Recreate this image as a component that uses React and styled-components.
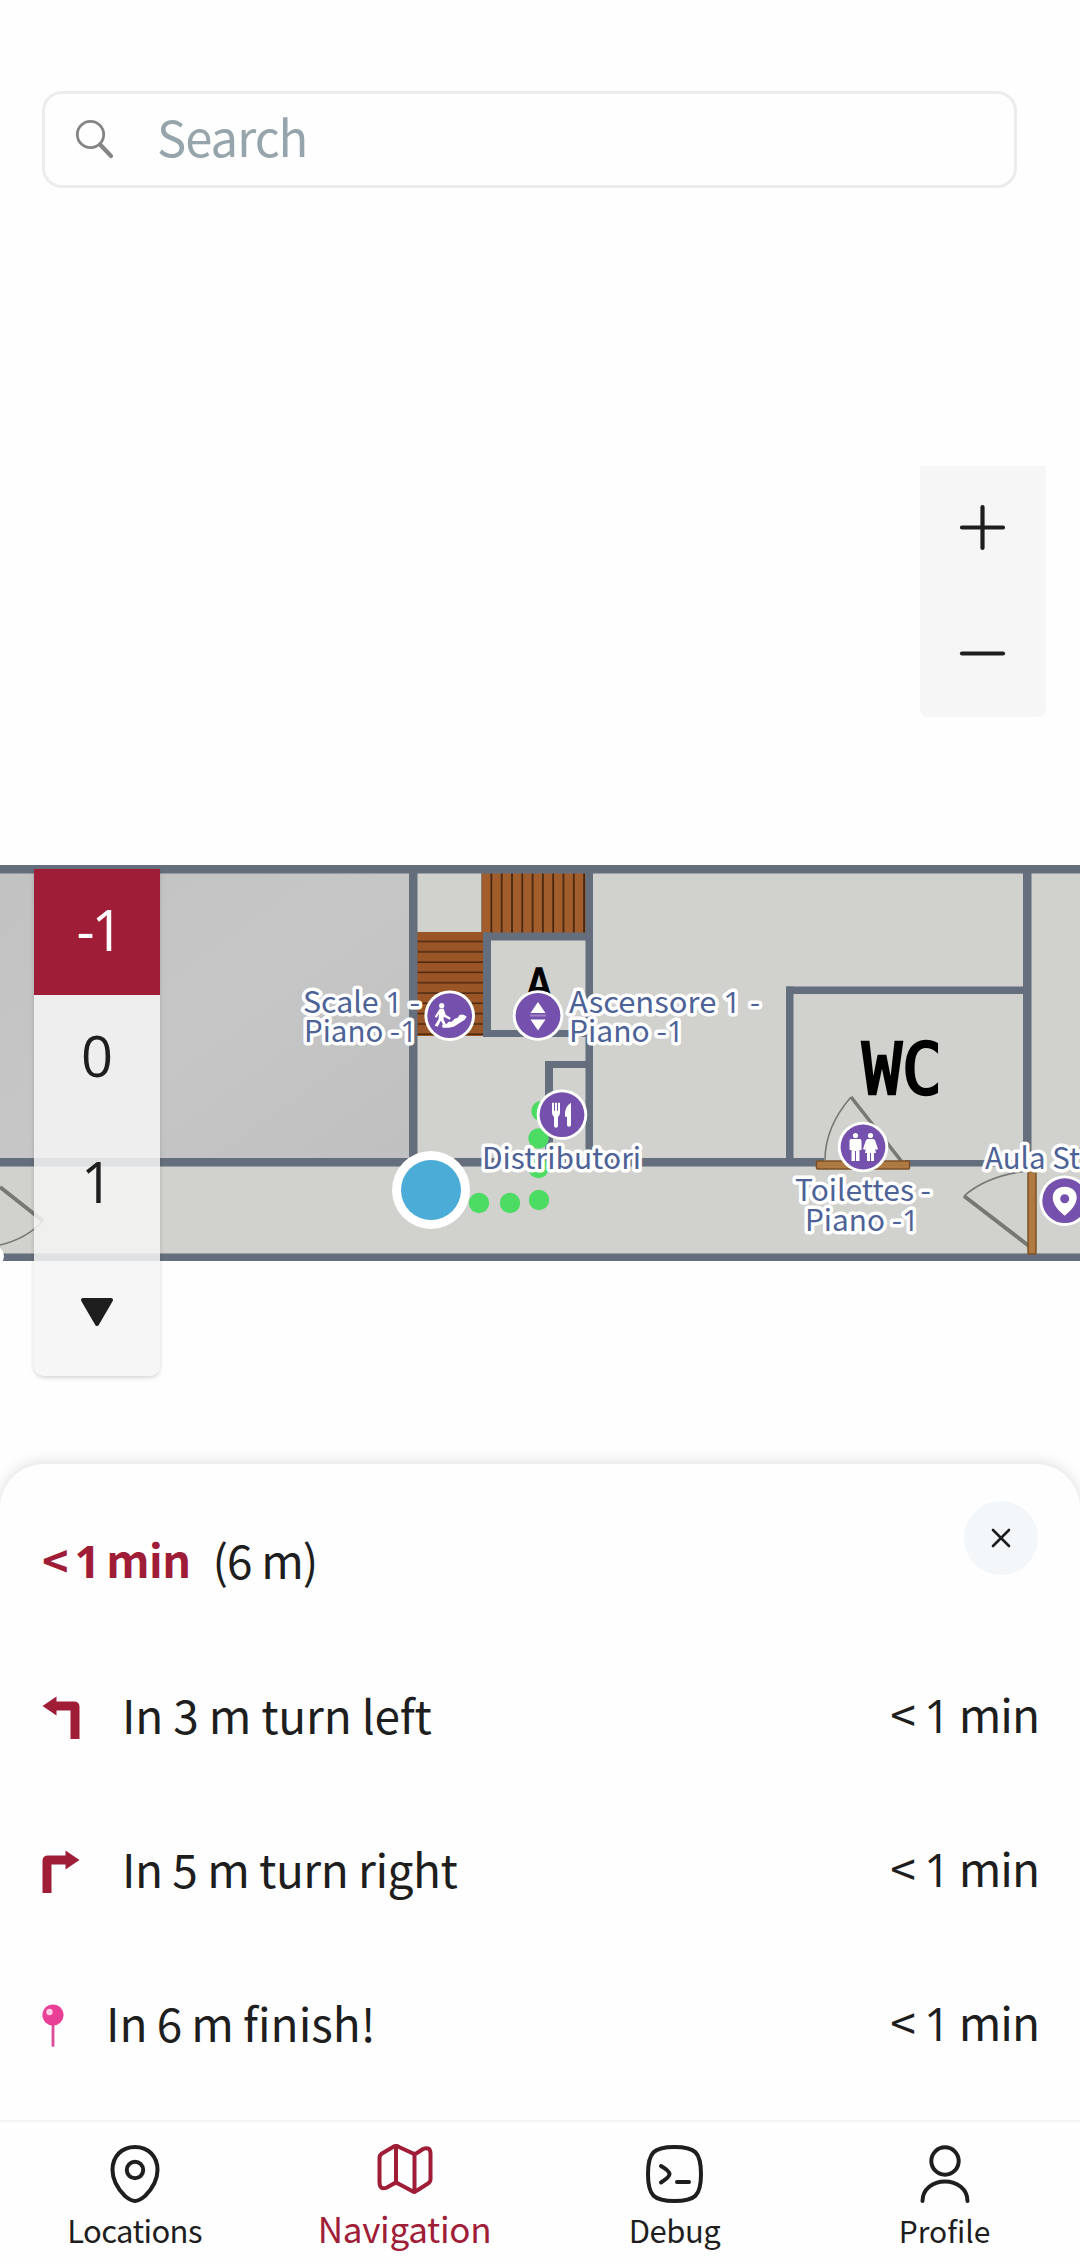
import React from "react";
import styled, { createGlobalStyle } from "styled-components";

const crimson = "#a01d38";
const ink = "#1e1e1e";
const wall = "#656e7c";

const GlobalStyle = createGlobalStyle`
  * { box-sizing: border-box; }
  body {
    margin: 0;
    background: #fefefe;
    font-family: "Noto Sans CJK SC", "Open Sans", sans-serif;
    color: ${ink};
  }
  button { font: inherit; color: inherit; border: 0; padding: 0; background: none; }
`;

const Screen = styled.div`
  width: 1080px;
  height: 2264px;
  display: flex;
  flex-direction: column;
  overflow: hidden;
  background: #fefefe;
`;

/* ---------- map ---------- */

const MapView = styled.main`
  position: relative;
  flex: 0 0 1464px;
`;

const PlanCanvas = styled.svg`
  position: absolute;
  inset: 0;
  display: block;
`;

const SearchBar = styled.div`
  position: absolute;
  left: 42px;
  top: 91px;
  width: 975px;
  height: 97px;
  display: flex;
  align-items: center;
  gap: 42px;
  padding-left: 30px;
  border: 3px solid #ececec;
  border-radius: 20px;
  background: #fefefe;
`;

const SearchLabel = styled.span`
  padding-bottom: 8px;
  font-size: 49px;
  line-height: 1;
  color: #95a5ab;
  letter-spacing: ${(p) => p.$track}px;
`;

const ZoomPanel = styled.div`
  position: absolute;
  left: 920px;
  top: 466px;
  width: 126px;
  display: flex;
  flex-direction: column;
  background: #f6f6f6;
  border-radius: 2px 2px 8px 8px;
`;

const ZoomButton = styled.button`
  height: 125.5px;
  display: flex;
  align-items: center;
  justify-content: center;
`;

const FloorPanel = styled.div`
  position: absolute;
  left: 34px;
  top: 869px;
  width: 126px;
  height: 507px;
  display: flex;
  flex-direction: column;
  overflow: hidden;
  border-radius: 0 0 10px 10px;
  background: rgba(245, 245, 245, 0.86);
  box-shadow: 0 2px 4px rgba(0, 0, 0, 0.16);
`;

const FloorButton = styled.button`
  height: 126px;
  flex: ${(p) => (p.$last ? "1" : "none")};
  display: flex;
  align-items: center;
  justify-content: center;
  padding-bottom: ${(p) => (p.$last ? 0 : 6)}px;
  padding-left: ${(p) => (p.$active ? 3 : 0)}px;
  font-family: "Open Sans", "Noto Sans", sans-serif;
  font-size: 56px;
  line-height: 1;
  font-weight: ${(p) => (p.$active ? 500 : 400)};
  letter-spacing: ${(p) => (p.$active ? "-3px" : "0")};
  color: ${(p) => (p.$active ? "#fff" : ink)};
  background: ${(p) => (p.$active ? crimson : "transparent")};
`;

/* ---------- directions sheet ---------- */

const Sheet = styled.section`
  position: relative;
  flex: 1;
  display: flex;
  flex-direction: column;
  padding: 37px 42px 0;
  background: #fefefe;
  border-radius: 44px 44px 0 0;
  box-shadow: 0 -2px 14px rgba(0, 0, 0, 0.12);
`;

const SheetHeader = styled.header`
  height: 139px;
  display: flex;
  justify-content: space-between;
  align-items: flex-start;
`;

const Summary = styled.div`
  display: flex;
  gap: 22px;
  padding-top: 34px;
  font-size: 46px;
  line-height: 48px;
`;

const Duration = styled.strong`
  font-weight: 700;
  font-size: 45px;
  color: ${crimson};
  white-space: nowrap;
  letter-spacing: ${(p) => p.$track}px;
  word-spacing: -3px;
`;

const Distance = styled.span`
  white-space: nowrap;
  letter-spacing: ${(p) => p.$track}px;
`;

const CloseButton = styled.button`
  width: 74px;
  height: 74px;
  display: flex;
  align-items: center;
  justify-content: center;
  border-radius: 50%;
  background: #f3f7fa;
`;

const Step = styled.div`
  height: 154px;
  display: flex;
  align-items: center;
  font-size: 46px;
  line-height: 48px;
`;

const StepIcon = styled.span`
  width: ${(p) => p.$width}px;
  display: flex;
  flex: none;
`;

const StepText = styled.span`
  flex: 1;
  padding-bottom: 6px;
  white-space: nowrap;
  letter-spacing: ${(p) => (p.$track ? `${p.$track}px` : "normal")};
  word-spacing: ${(p) => p.$words || 0}px;
`;

const StepTime = styled.span`
  padding-bottom: 6px;
  margin-right: -1px;
  white-space: nowrap;
  letter-spacing: -1px;
`;

/* Numeral one without a foot. */
const One = styled.span`
  font-family: "Open Sans", "Noto Sans", sans-serif;
`;

/* ---------- tab bar ---------- */

const TabBar = styled.nav`
  position: relative;
  height: 144px;
  display: grid;
  grid-template-columns: repeat(4, 1fr);
  border-top: 2px solid #f4f4f4;
  background: #fefefe;
`;

const Tab = styled.button`
  display: flex;
  flex-direction: column;
  align-items: center;
  padding-top: ${(p) => (p.$active ? 21 : 23)}px;
  padding-right: 1px;
  color: ${(p) => (p.$active ? crimson : ink)};
`;

const TabIcon = styled.span`
  height: ${(p) => (p.$active ? 64 : 66)}px;
  display: flex;
`;

const TabLabel = styled.span`
  font-size: ${(p) => p.$size}px;
  line-height: ${(p) => (p.$active ? 42 : 38)}px;
  letter-spacing: ${(p) => (p.$track ? `${p.$track}px` : "normal")};
`;

/* ---------- map drawing ---------- */

const Label = styled.text`
  font-size: 29.5px;
  fill: #4d6296;
  stroke: #fff;
  stroke-width: 7px;
  stroke-linejoin: round;
  paint-order: stroke;
`;

const NarrowOne = styled.tspan`
  font-family: "Open Sans", "Noto Sans", sans-serif;
`;

const PlanText = styled.text`
  font-family: "DejaVu Sans Mono", monospace;
  fill: #000;
  stroke: #000;
  stroke-width: ${(p) => p.$weight}px;
`;

function MapLabel({ x, y, width, children }) {
  const parts = children.split(/(1)/);
  return (
    <Label x={x} y={y} textLength={width} lengthAdjust="spacingAndGlyphs">
      {parts.map((part, i) => (part === "1" ? <NarrowOne key={i}>1</NarrowOne> : part))}
    </Label>
  );
}

function Marker({ x, y, children }) {
  return (
    <g transform={`translate(${x} ${y})`}>
      <circle r="25.3" fill="#fff" />
      <circle r="22.4" fill="#7550ac" />
      <g fill="#fff">{children}</g>
    </g>
  );
}

const walls = [
  [0, 865, 1080, 8.5],
  [0, 1158, 824, 8.5],
  [905, 1160, 120, 6.5],
  [0, 1253.5, 1080, 7.5],
  [409, 865, 8.5, 296],
  [585.5, 865, 7.5, 296],
  [483, 932.5, 105, 8],
  [483, 932.5, 8, 104],
  [483, 1030, 105, 7],
  [545, 1061, 42, 7],
  [545, 1061, 8, 98],
  [786, 986.5, 7.5, 178],
  [786, 986.5, 240, 7.5],
  [1023, 865, 8.5, 300],
];

const routeDots = [
  [479, 1203], [510, 1203], [539, 1200], [538.5, 1168], [538.5, 1138.5], [541.5, 1111],
];

function FloorPlan() {
  return (
    <PlanCanvas width="1080" height="1464" viewBox="0 0 1080 1464">
      <defs>
        <linearGradient id="hall" x1="0" y1="0" x2="1" y2="1">
          <stop offset="0" stopColor="#c2c2c2" />
          <stop offset="0.5" stopColor="#c6c6c6" />
          <stop offset="1" stopColor="#c0c0c0" />
        </linearGradient>
        <pattern id="treadsUp" x="482" y="874" width="10.3" height="60" patternUnits="userSpaceOnUse">
          <rect width="10.3" height="60" fill="#a15d2c" />
          <rect x="8.5" width="1.8" height="60" fill="#4a2810" />
        </pattern>
        <pattern id="treadsAcross" x="418" y="932" width="66" height="10.3" patternUnits="userSpaceOnUse">
          <rect width="66" height="10.3" fill="#9a5526" />
          <rect y="8.8" width="66" height="1.5" fill="#4a2810" />
        </pattern>
      </defs>

      <rect y="866" width="1080" height="394" fill="#d1d1ce" />
      <rect y="866" width="410" height="294" fill="url(#hall)" />
      <rect x="481.5" y="873" width="105" height="60" fill="url(#treadsUp)" />
      <rect x="417" y="932" width="66" height="104" fill="url(#treadsAcross)" />

      {walls.map(([x, y, w, h], i) => (
        <rect key={i} x={x} y={y} width={w} height={h} fill={wall} />
      ))}

      <g fill="none" stroke="#777773">
        <path d="M0 1187L43 1221" strokeWidth="4" />
        <path d="M43 1221Q26 1239 0 1245" strokeWidth="1.6" />
        <path d="M851 1097L902 1162" strokeWidth="3.6" />
        <path d="M851 1097Q825 1127 825 1160" strokeWidth="1.6" />
        <path d="M964 1196L1029 1246" strokeWidth="4" />
        <path d="M964 1196Q988 1175 1029 1171" strokeWidth="1.6" />
      </g>
      <g fill="#ae7a42" stroke="#7b5129" strokeWidth="1.5">
        <rect x="816.5" y="1161" width="93" height="8" rx="1" />
        <rect x="1028" y="1168" width="8" height="86" rx="1" />
      </g>

      <PlanText x="862" y="1094" fontSize="72" textLength="80" lengthAdjust="spacingAndGlyphs" $weight={2.6}>WC</PlanText>
      <PlanText x="526" y="999" fontSize="43" textLength="26" lengthAdjust="spacingAndGlyphs" $weight={1.4}>A</PlanText>

      <circle cx="-6" cy="1256" r="10" fill="#fff" />

      {routeDots.map(([x, y], i) => (
        <circle key={i} cx={x} cy={y} r="10.2" fill="#4cdb63" />
      ))}
      <circle cx="431" cy="1190" r="39" fill="#fff" />
      <circle cx="431" cy="1190" r="30" fill="#4aacd7" />

      <Marker x={449.7} y={1015.7}>
        <circle cx="-8" cy="-10" r="2.6" />
        <path d="M-10-7L-6-7L-4-1L1 2L0 4L-6 1L-6 4L-3 10L-5 11L-9 5L-12 11L-15 10L-11 3L-11-2L-13 2L-15 1Z" />
        <path d="M-8 9L-4 9L-1 6L2 6L5 3L8 2L10-1L14-1L17 1L15 4L4 11L-1 12L-7 12Z" />
      </Marker>
      <Marker x={538} y={1015.5}>
        <path d="M0-13.500L7.500-2.500H-7.500Z" />
        <rect x="-8" y="-1" width="16" height="2" opacity="0.3" />
        <path d="M0 15L7.500 4H-7.500Z" />
      </Marker>
      <Marker x={562} y={1114.7}>
        <path d="M-10-12h2v8h1v-8h2v8h1v-8h2v9q0 4-2 5v9q0 2-2 2t-2-2v-9q-2-1-2-5Z" />
        <path d="M9-12v22q0 2-2 2t-2-2v-8h-2q-1-10 6-14Z" />
      </Marker>
      <Marker x={863} y={1147}>
        <circle cx="-7.500" cy="-11.500" r="2.600" />
        <path d="M-12-8h9q1.500 0 1.500 2v9h-2v11h-3.500v-10h-1v10h-3.500v-11h-2v-9q0-2 1.500-2Z" />
        <circle cx="7.500" cy="-11.500" r="2.600" />
        <path d="M5-8h5q2 0 3 4l2 6l-2 1l-1-2l1 5h-2v8h-3v-8h-1v8h-3v-8h-2l1-5l-1 2l-2-1l2-6q1-4 3-4Z" />
      </Marker>
      <Marker x={1064.7} y={1200.7}>
        <path fillRule="evenodd" d="M0-14C8-14 12-9 12-3C12 4 5 11 0 15C-5 11-12 4-12-3C-12-9-8-14 0-14ZM0-6.500A4.500 4.500 0 1 0 0 2.500A4.500 4.500 0 1 0 0-6.500Z" />
      </Marker>

      <MapLabel x={303} y={1013} width={117}>Scale 1 -</MapLabel>
      <MapLabel x={304} y={1042} width={113}>Piano -1</MapLabel>
      <MapLabel x={569} y={1013} width={172}>Ascensore 1</MapLabel>
      <MapLabel x={750} y={1013} width={10}>-</MapLabel>
      <MapLabel x={569} y={1042} width={115}>Piano -1</MapLabel>
      <MapLabel x={482} y={1169} width={159}>Distributori</MapLabel>
      <MapLabel x={795} y={1201} width={136}>Toilettes -</MapLabel>
      <MapLabel x={805} y={1231} width={114}>Piano -1</MapLabel>
      <MapLabel x={985} y={1169} width={95}>Aula St</MapLabel>
    </PlanCanvas>
  );
}

/* ---------- icons ---------- */

const LineIcon = styled.svg`
  display: block;
  flex: none;
  overflow: visible;
  fill: none;
  color: ${(p) => p.$color || "inherit"};
  stroke: currentColor;
  stroke-linecap: round;
  stroke-linejoin: round;
`;

const SearchIcon = () => (
  <LineIcon width="40" height="40" viewBox="0 0 40 40" $color="#858585">
    <circle cx="15.500" cy="14.500" r="13.200" strokeWidth="2.800" />
    <path d="M25.500 25L36 36" strokeWidth="4.200" />
  </LineIcon>
);

const PlusIcon = () => (
  <LineIcon width="46" height="46" viewBox="0 0 46 46" strokeWidth="4.200">
    <path d="M2 21.500h41M22.500 1v41" />
  </LineIcon>
);

const MinusIcon = () => (
  <LineIcon width="46" height="46" viewBox="0 0 46 46" strokeWidth="4.200">
    <path d="M2 22.500h41" />
  </LineIcon>
);

const DownIcon = () => (
  <svg width="34" height="30" viewBox="0 0 34 30">
    <path d="M3 3H31L17 27Z" fill={ink} stroke={ink} strokeWidth="4" strokeLinejoin="round" />
  </svg>
);

const CloseIcon = () => (
  <LineIcon width="20" height="20" viewBox="0 0 20 20" strokeWidth="2.600">
    <path d="M2 2L18 18M18 2L2 18" />
  </LineIcon>
);

const TurnIcon = ({ right }) => (
  <svg width="38" height="43" viewBox="0 0 38 43">
    <path
      transform={right ? "translate(38 0) scale(-1 1)" : undefined}
      d="M0.500 10L14.500 0.500V5.500H32Q37.500 5.500 37.500 11V43H28.500V14.500H14.500V19.500Z"
      fill={crimson}
    />
  </svg>
);

const PinIcon = () => (
  <svg width="22" height="43" viewBox="0 0 22 43">
    <path d="M11 19V41.500" stroke="#dc4c98" strokeWidth="2.800" strokeLinecap="round" />
    <circle cx="11" cy="11" r="10.600" fill="#ea3f96" />
    <circle cx="7.500" cy="8" r="3.200" fill="#fcd0e6" />
  </svg>
);

const LocationIcon = () => (
  <LineIcon width="50" height="58" viewBox="0 0 50 58" strokeWidth="4">
    <path d="M25 2C38 2 47.500 11 47.500 25C47.500 35 41 45 35 51Q29 56 25 56Q21 56 15 51C9 45 2.500 35 2.500 25C2.500 11 12 2 25 2Z" />
    <circle cx="25" cy="25" r="8.200" />
  </LineIcon>
);

const MapIcon = () => (
  <LineIcon width="56" height="52" viewBox="0 0 56 52" strokeWidth="4">
    <path d="M2.500 15Q2.500 12 5 10.500L16 4Q19 2 22 4L35 10Q37.500 11.500 40 10L46 6Q53.500 3 53.500 11V36Q53.500 39 51 40.500L40 47.500Q37.500 49.500 35 48L22 41Q19 39 16 41L10 44.500Q2.500 47.500 2.500 39Z" />
    <path d="M19 3V40M37.500 11V49" />
  </LineIcon>
);

const DebugIcon = () => (
  <LineIcon width="57" height="58" viewBox="0 0 57 58" strokeWidth="4">
    <path d="M28.500 2C49 2 55 7 55 29C55 51 49 56 28.500 56C8 56 2 51 2 29C2 7 8 2 28.500 2Z" />
    <path d="M15 21Q23.500 26 23.500 29T15 37.500M31 37H43" />
  </LineIcon>
);

const ProfileIcon = () => (
  <LineIcon width="50" height="58" viewBox="0 0 50 58" strokeWidth="4">
    <circle cx="25" cy="16" r="13.700" />
    <path d="M2.500 56C2.500 44 13 36.500 25 36.500S47.500 44 47.500 56" />
  </LineIcon>
);

/* ---------- content ---------- */

const steps = [
  { text: "In 3 m turn left", icon: <TurnIcon />, width: 80, track: -0.2 },
  { text: "In 5 m turn right", icon: <TurnIcon right />, width: 80, track: -0.5 },
  { text: "In 6 m finish!", icon: <PinIcon />, width: 64, words: -1.2 },
];

const tabs = [
  { label: "Locations", icon: <LocationIcon />, track: -0.6, size: 31 },
  { label: "Navigation", icon: <MapIcon />, track: -0.3, size: 35, active: true },
  { label: "Debug", icon: <DebugIcon />, track: -0.5, size: 31 },
  { label: "Profile", icon: <ProfileIcon />, size: 30 },
];

export default function App() {
  return (
    <>
      <GlobalStyle />
      <Screen>
        <MapView>
          <FloorPlan />
          <SearchBar>
            <SearchIcon />
            <SearchLabel $track={-1}>Search</SearchLabel>
          </SearchBar>
          <ZoomPanel>
            <ZoomButton aria-label="Zoom in"><PlusIcon /></ZoomButton>
            <ZoomButton aria-label="Zoom out"><MinusIcon /></ZoomButton>
          </ZoomPanel>
          <FloorPanel>
            <FloorButton $active>-1</FloorButton>
            <FloorButton>0</FloorButton>
            <FloorButton>1</FloorButton>
            <FloorButton $last aria-label="More floors"><DownIcon /></FloorButton>
          </FloorPanel>
        </MapView>
        <Sheet>
          <SheetHeader>
            <Summary>
              <Duration $track={-0.6}>&lt; <One>1</One> min</Duration>
              <Distance $track={-0.9}>(6 m)</Distance>
            </Summary>
            <CloseButton aria-label="Close"><CloseIcon /></CloseButton>
          </SheetHeader>
          {steps.map((s) => (
            <Step key={s.text}>
              <StepIcon $width={s.width}>{s.icon}</StepIcon>
              <StepText $track={s.track} $words={s.words}>{s.text}</StepText>
              <StepTime>&lt; <One>1</One> min</StepTime>
            </Step>
          ))}
        </Sheet>
        <TabBar>
          {tabs.map((t) => (
            <Tab key={t.label} $active={t.active}>
              <TabIcon $active={t.active}>{t.icon}</TabIcon>
              <TabLabel $active={t.active} $size={t.size} $track={t.track}>{t.label}</TabLabel>
            </Tab>
          ))}
        </TabBar>
      </Screen>
    </>
  );
}
